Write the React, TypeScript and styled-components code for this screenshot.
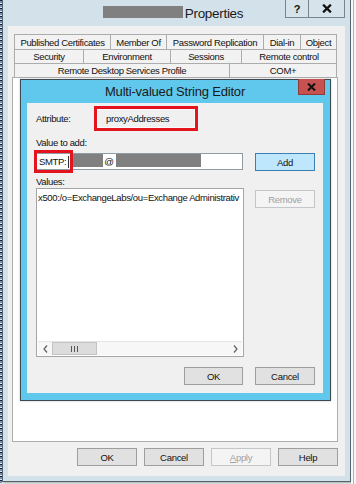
import styled, { createGlobalStyle } from "styled-components";

const GlobalStyle = createGlobalStyle`
  html, body { margin: 0; padding: 0; }
  body {
    width: 356px;
    height: 484px;
    overflow: hidden;
    background: #f3f5f6;
    font-family: "Liberation Sans", Arial, sans-serif;
    color: #111;
  }
`;

const tabRows = [
  {
    cols: "96px 56px 97px 37px 36px",
    h: 15,
    tabs: ["Published Certificates", "Member Of", "Password Replication", "Dial-in", "Object"],
  },
  { cols: "69px 87px 71px 95px", h: 14, tabs: ["Security", "Environment", "Sessions", "Remote control"] },
  { cols: "215px 107px", h: 14, tabs: ["Remote Desktop Services Profile", "COM+"] },
];

const CloseGlyph = ({ size = 9 }: { size?: number }) => (
  <svg width={size} height={size - 1} viewBox="0 0 9 8">
    <path d="M1 0.5 L8 7.5 M8 0.5 L1 7.5" stroke="#111" strokeWidth="2" />
  </svg>
);

const Chevron = ({ dir }: { dir: "left" | "right" }) => (
  <svg width="5" height="8" viewBox="0 0 5 8">
    <path
      d={dir === "left" ? "M4 0.5 L1 4 L4 7.5" : "M1 0.5 L4 4 L1 7.5"}
      fill="none"
      stroke="#606060"
      strokeWidth="1.2"
    />
  </svg>
);

const App = () => {
  return (
    <>
      <GlobalStyle />
      <Page>
        <LeftStrip />
        <Window>
          <TitleBar>
            <span />
            <WindowTitle>
              <Redacted $w={80} $h={12} />
              <span>Properties</span>
            </WindowTitle>
            <CaptionButtons>
              <CaptionButton $w={24}>?</CaptionButton>
              <CaptionButton $w={37}>
                <CloseGlyph size={10} />
              </CaptionButton>
            </CaptionButtons>
          </TitleBar>

          <Client>
            <TabStrip>
              {tabRows.map((row, i) => (
                <TabRow key={i} $cols={row.cols} $h={row.h}>
                  {row.tabs.map((t) => (
                    <Tab key={t}>{t}</Tab>
                  ))}
                </TabRow>
              ))}
            </TabStrip>

            <TabPanel>
              <Dialog>
                <DialogTitleBar>
                  <span />
                  <DialogTitle>Multi-valued String Editor</DialogTitle>
                  <DialogClose>
                    <CloseGlyph />
                  </DialogClose>
                </DialogTitleBar>

                <DialogBody>
                  <AttrRow>
                    <Label $w={58}>Attribute:</Label>
                    <Highlight>
                      <ReadOnlyField>proxyAddresses</ReadOnlyField>
                    </Highlight>
                  </AttrRow>

                  <FieldLabel>Value to add:</FieldLabel>
                  <InputRow>
                    <TextBox>
                      <span>SMTP:</span>
                      <Caret />
                      <Redacted $w={32} $h={13} $ml={2} />
                      <At>@</At>
                      <Redacted $w={85} $h={13} $ml={2} />
                      <RedOutline />
                    </TextBox>
                    <Button $variant="primary">Add</Button>
                  </InputRow>

                  <FieldLabel>Values:</FieldLabel>
                  <ListRow>
                    <ListBox>
                      <ListItem>x500:/o=ExchangeLabs/ou=Exchange Administrativ</ListItem>
                      <HScroll>
                        <ArrowBtn>
                          <Chevron dir="left" />
                        </ArrowBtn>
                        <Thumb>
                          <Grip />
                        </Thumb>
                        <Track />
                        <ArrowBtn>
                          <Chevron dir="right" />
                        </ArrowBtn>
                      </HScroll>
                    </ListBox>
                    <Button $variant="disabled" $mt={2}>
                      Remove
                    </Button>
                  </ListRow>

                  <DialogFooter>
                    <Button $w={59}>OK</Button>
                    <Button>Cancel</Button>
                  </DialogFooter>
                </DialogBody>
              </Dialog>
            </TabPanel>

            <ButtonRow>
              <Button>OK</Button>
              <Button>Cancel</Button>
              <Button $variant="disabled">
                <u>A</u>pply
              </Button>
              <Button>Help</Button>
            </ButtonRow>
          </Client>
        </Window>
        <RightStrip />
      </Page>
    </>
  );
};

export default App;

const Page = styled.div`
  display: flex;
  width: 356px;
  height: 484px;
`;

const LeftStrip = styled.div`
  width: 2px;
  background: repeating-linear-gradient(
    180deg,
    #1f2328 0 1px,
    #6f92c6 1px 3px,
    #dfe6ee 3px 4px
  );
`;

const RightStrip = styled.div`
  flex: 1;
  background: linear-gradient(90deg, #f7f8f8 0 2px, #a9b3b8 2px 3px, #f2f4f5 3px);
`;

const Window = styled.div`
  width: 349px;
  height: 482px;
  box-sizing: border-box;
  display: flex;
  flex-direction: column;
  padding: 0 5px 5px;
  background: #d3e1ea;
  border: 1px solid #56636b;
  border-top: none;
  box-shadow: 1px 1px 2px rgba(0, 0, 0, 0.35);
`;

const TitleBar = styled.div`
  height: 26px;
  display: grid;
  grid-template-columns: 1fr auto 1fr;
  align-items: center;
`;

const WindowTitle = styled.div`
  display: flex;
  align-items: center;
  gap: 2px;
  padding-right: 7px;
  font-size: 13.5px;
  letter-spacing: -0.3px;
  color: #1b1b1b;
`;

const CaptionButtons = styled.div`
  justify-self: end;
  align-self: start;
  display: flex;
`;

const CaptionButton = styled.div<{ $w: number }>`
  width: ${(p) => p.$w}px;
  height: 18px;
  box-sizing: border-box;
  display: flex;
  align-items: center;
  justify-content: center;
  border: 1px solid #76858e;
  border-top: none;
  background: #d6e3ea;
  font-size: 11px;
  font-weight: bold;
  color: #111;
  & + & {
    margin-left: -1px;
  }
`;

const Client = styled.div`
  flex: 1;
  display: flex;
  flex-direction: column;
  padding: 8px 7px 10px 4px;
  background: #f0f0f0;
`;

const TabStrip = styled.div`
  display: flex;
  flex-direction: column;
  margin: 0 1px 0 2px;
`;

const TabRow = styled.div<{ $cols: string; $h: number }>`
  display: grid;
  grid-template-columns: ${(p) => p.$cols};
  height: ${(p) => p.$h}px;
  border-top: 1px solid #acacac;
  border-left: 1px solid #acacac;
  box-sizing: border-box;
`;

const Tab = styled.div`
  display: flex;
  align-items: center;
  justify-content: center;
  border-right: 1px solid #acacac;
  background: #f2f2f2;
  font-size: 9.5px;
  letter-spacing: -0.35px;
  white-space: nowrap;
  overflow: hidden;
`;

const TabPanel = styled.div`
  flex: 1;
  position: relative;
  background: #ffffff;
  border: 1px solid #adadad;
`;

const Dialog = styled.div`
  position: absolute;
  left: 7px;
  top: 1px;
  width: 311px;
  height: 322px;
  box-sizing: border-box;
  display: flex;
  flex-direction: column;
  padding: 0 7px 7px 6px;
  background: #60c8ec;
  border: 1px solid #3d4a52;
  box-shadow: 0 0 2px rgba(0, 0, 0, 0.25);
`;

const DialogTitleBar = styled.div`
  height: 23px;
  display: grid;
  grid-template-columns: 1fr auto 1fr;
  align-items: center;
`;

const DialogTitle = styled.div`
  font-size: 13px;
  letter-spacing: -0.2px;
  color: #1a1a1a;
`;

const DialogClose = styled.div`
  justify-self: end;
  align-self: start;
  width: 27px;
  height: 16px;
  margin: -1px -2px 0 0;
  box-sizing: border-box;
  display: flex;
  align-items: center;
  justify-content: center;
  background: #c75050;
  border: 1px solid #8f3b37;
  border-top: none;
`;

const DialogBody = styled.div`
  flex: 1;
  display: flex;
  flex-direction: column;
  padding: 3px 8px 8px 9px;
  background: #f0f0f0;
  font-size: 9.5px;
  letter-spacing: -0.35px;
`;

const AttrRow = styled.div`
  display: flex;
  align-items: center;
  height: 25px;
`;

const Label = styled.div<{ $w?: number }>`
  width: ${(p) => (p.$w ? `${p.$w}px` : "auto")};
  line-height: 13px;
`;

const Highlight = styled.div`
  width: 104px;
  height: 25px;
  box-sizing: border-box;
  display: flex;
  border: 3px solid #e3141e;
`;

const ReadOnlyField = styled.div`
  flex: 1;
  display: flex;
  align-items: center;
  padding-left: 8px;
  background: #f0f0f0;
  border: 1px solid #fafafa;
`;

const FieldLabel = styled.div`
  margin-top: 5px;
  height: 13px;
  line-height: 13px;
`;

const InputRow = styled.div`
  display: flex;
  gap: 12px;
  align-items: flex-start;
  height: 18px;
  margin-top: 4px;
  margin-bottom: -1px;
`;

const TextBox = styled.div`
  position: relative;
  width: 207px;
  height: 17px;
  box-sizing: border-box;
  display: flex;
  align-items: center;
  padding-left: 2px;
  background: #ffffff;
  border: 1px solid #8f9ca6;
  white-space: nowrap;
`;

const Caret = styled.span`
  width: 1px;
  height: 12px;
  margin-left: 2px;
  background: #333;
`;

const At = styled.span`
  margin-left: 1px;
`;

const Redacted = styled.span<{ $w: number; $h: number; $ml?: number }>`
  display: inline-block;
  align-self: flex-start;
  width: ${(p) => p.$w}px;
  height: ${(p) => p.$h}px;
  margin-left: ${(p) => p.$ml ?? 0}px;
  background: #808080;
`;

const RedOutline = styled.div`
  position: absolute;
  left: -3px;
  top: -4px;
  width: 39px;
  height: 23px;
  box-sizing: border-box;
  border: 3px solid #e3141e;
`;

const ListRow = styled.div`
  display: flex;
  gap: 11px;
  align-items: flex-start;
`;

const ListBox = styled.div`
  width: 208px;
  height: 169px;
  box-sizing: border-box;
  display: flex;
  flex-direction: column;
  background: #ffffff;
  border: 1px solid #a5a5a5;
`;

const ListItem = styled.div`
  flex: 1;
  padding: 2px 0 0 1px;
  line-height: 13px;
  white-space: nowrap;
  overflow: hidden;
`;

const HScroll = styled.div`
  height: 13px;
  margin: 0 1px 1px;
  display: flex;
  background: #f7f7f7;
  border-top: 1px solid #e6e6e6;
`;

const ArrowBtn = styled.div`
  width: 14px;
  display: flex;
  align-items: center;
  justify-content: center;
`;

const Thumb = styled.div`
  width: 45px;
  box-sizing: border-box;
  display: flex;
  align-items: center;
  justify-content: center;
  background: #dcdcdc;
  border: 1px solid #c3c3c3;
`;

const Grip = styled.div`
  width: 7px;
  height: 6px;
  background: repeating-linear-gradient(90deg, #555 0 1px, transparent 1px 3px);
`;

const Track = styled.div`
  flex: 1;
`;

const DialogFooter = styled.div`
  display: flex;
  justify-content: flex-end;
  gap: 12px;
  margin-top: 10px;
`;

const ButtonRow = styled.div`
  display: flex;
  justify-content: flex-end;
  gap: 7px;
  margin-top: 6px;
`;

const Button = styled.div<{ $variant?: "default" | "primary" | "disabled"; $w?: number; $mt?: number }>`
  width: ${(p) => p.$w ?? 60}px;
  height: 18px;
  margin-top: ${(p) => p.$mt ?? 0}px;
  box-sizing: border-box;
  display: flex;
  align-items: center;
  justify-content: center;
  font-size: 9.5px;
  letter-spacing: -0.3px;
  background: ${(p) =>
    p.$variant === "primary" ? "#bee6fd" : p.$variant === "disabled" ? "#f4f4f4" : "#e1e1e1"};
  border: 1px solid
    ${(p) =>
      p.$variant === "primary" ? "#3c7fb1" : p.$variant === "disabled" ? "#c4c6c8" : "#9e9e9e"};
  color: ${(p) => (p.$variant === "disabled" ? "#a0a0a0" : "#111")};
`;
